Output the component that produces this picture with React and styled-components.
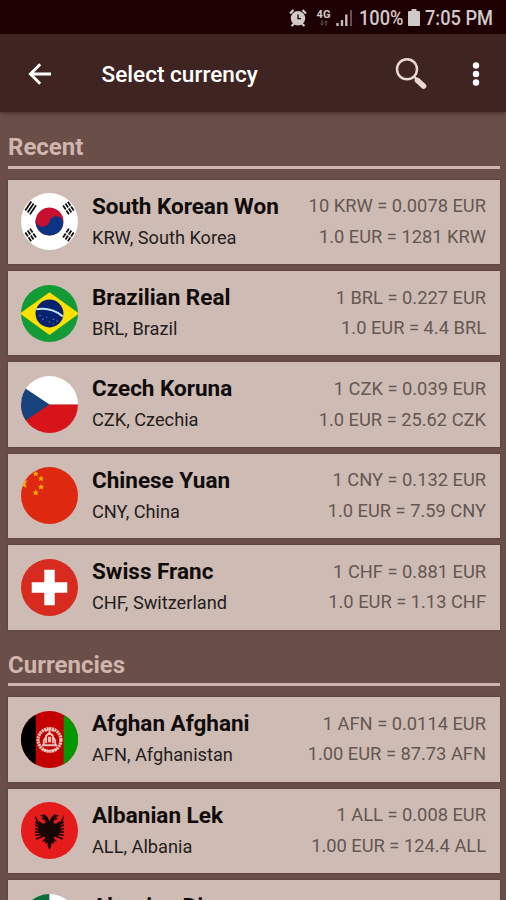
import React from 'react';
import styled, { createGlobalStyle } from 'styled-components';

const recent = [
  { name: 'South Korean Won', code: 'KRW', country: 'South Korea', from: '10 KRW = 0.0078 EUR', to: '1.0 EUR = 1281 KRW' },
  { name: 'Brazilian Real', code: 'BRL', country: 'Brazil', from: '1 BRL = 0.227 EUR', to: '1.0 EUR = 4.4 BRL' },
  { name: 'Czech Koruna', code: 'CZK', country: 'Czechia', from: '1 CZK = 0.039 EUR', to: '1.0 EUR = 25.62 CZK' },
  { name: 'Chinese Yuan', code: 'CNY', country: 'China', from: '1 CNY = 0.132 EUR', to: '1.0 EUR = 7.59 CNY' },
  { name: 'Swiss Franc', code: 'CHF', country: 'Switzerland', from: '1 CHF = 0.881 EUR', to: '1.0 EUR = 1.13 CHF' },
];

const currencies = [
  { name: 'Afghan Afghani', code: 'AFN', country: 'Afghanistan', from: '1 AFN = 0.0114 EUR', to: '1.00 EUR = 87.73 AFN' },
  { name: 'Albanian Lek', code: 'ALL', country: 'Albania', from: '1 ALL = 0.008 EUR', to: '1.00 EUR = 124.4 ALL' },
  { name: 'Algerian Dinar', code: 'DZD', country: 'Algeria', from: '1 DZD = 0.007 EUR', to: '1.00 EUR = 134.5 DZD' },
];

// every flag is drawn in a 60x60 box and clipped to a circle
const flags = {
  KRW: (
    <>
      <rect width="60" height="60" fill="#fff" />
      <g transform="rotate(14 30 30)">
        <circle cx="30" cy="30" r="14.7" fill="#c8102e" />
        <path d="M15.3 30a7.35 7.35 0 0 0 14.7 0a7.35 7.35 0 0 1 14.7 0a14.7 14.7 0 0 1-29.4 0z" fill="#0b3484" />
      </g>
      <g stroke="#111" strokeWidth="1.9">
        <path d="M4.5 18.5l6.3-9.5M7 20.5l6.3-9.5M9.5 22.5l6.3-9.5" />
        <path d="M4.5 41.5l6.3 9.5M7 39.5l6.3 9.5M9.5 37.5l6.3 9.5" strokeDasharray="5 1.2" />
        <path d="M55.5 18.5l-6.3-9.5M53 20.5l-6.3-9.5M50.5 22.5l-6.3-9.5" strokeDasharray="5 1.2" />
        <path d="M55.5 41.5l-6.3 9.5M53 39.5l-6.3 9.5M50.5 37.5l-6.3 9.5" strokeDasharray="5 1.2" />
      </g>
    </>
  ),
  BRL: (
    <>
      <rect width="60" height="60" fill="#129b36" />
      <path d="M-1 30L30 7.5L61 30L30 52.5z" fill="#fee000" />
      <circle cx="30" cy="30" r="14.7" fill="#05216f" />
      <path d="M16 25.5q16-2.5 28 7.5" stroke="#c5e3ee" strokeWidth="2.2" fill="none" />
      <g fill="#6f86bd">
        <circle cx="20" cy="32" r=".8" />
        <circle cx="23" cy="36" r=".8" />
        <circle cx="27" cy="34" r=".7" />
        <circle cx="30" cy="39" r=".8" />
        <circle cx="34" cy="36" r=".8" />
        <circle cx="38" cy="38" r=".8" />
        <circle cx="34" cy="41" r=".7" />
      </g>
    </>
  ),
  CZK: (
    <>
      <rect width="60" height="30" fill="#fff" />
      <rect y="30" width="60" height="30" fill="#d7141a" />
      <path d="M-15 0L30 30L-15 60z" fill="#17427b" />
    </>
  ),
  CNY: (
    <>
      <rect width="60" height="60" fill="#de2910" />
      <g fill="#ffb300">
        <path d="M1 13l1.5 2.5 4.5-1.5-2.5 3.6 1.5 4.2-5-2z" />
        <path id="star" d="M15.5 4l.9 2 2.2.2-1.6 1.5.5 2.3-2-1.2-2 1.2.5-2.3-1.6-1.5 2.2-.2z" />
        <use href="#star" x="5.6" y="5" />
        <use href="#star" x="5.6" y="13.8" />
        <use href="#star" y="19.8" />
      </g>
    </>
  ),
  CHF: (
    <>
      <rect width="60" height="60" fill="#d82b20" />
      <path d="M24.5 11.3h11v13.2h13.2v11h-13.2v13.2h-11v-13.2h-13.2v-11h13.2z" fill="#fff" />
    </>
  ),
  AFN: (
    <>
      <rect width="60" height="60" fill="#c30000" />
      <rect width="15.5" height="60" fill="#000" />
      <rect x="45" width="15" height="60" fill="#009a00" />
      <g fill="none" stroke="#f0c4be">
        <circle cx="30" cy="30.5" r="12" strokeWidth="3.4" strokeDasharray="2.1 .7" />
        <path d="M22 36h16M24 36v-5l2-3M36 36v-5l-2-3M26.5 34v-8l3.5-3 3.5 3v8M30 23v-5M25 21l3-1M35 21l-3-1M22 40q8 4 16 0" strokeWidth="2" />
        <path d="M30 27v6" strokeWidth="3" />
      </g>
    </>
  ),
  ALL: (
    <>
      <rect width="60" height="60" fill="#e51b1c" />
      <g fill="#160606">
        <path d="M30 20l-2-4-3.5-3-4.5 1.5 4 1.5-3 1.5 4 1.5 1 3-3 1-4-3-1 9 3 7 5 1-4 5 4-1-1 3 3-1 0 3 2 4 2-4 0-3 3 1-1-3 4 1-4-5 5-1 3-7-1-9-4 3-3-1 1-3 4-1.5-3-1.5 4-1.5-4.5-1.5-3.5 3z" />
        <path d="M20 24l-5-10 0 3 1 3zM45 14l-5 10 4-4 1-3z" />
      </g>
      <path
        d="M20 24l-5-3M20 27l-5-3M20 30l-5-2M21 32l-6-.5M22 34l-7 1M23 36l-7 3M40 24l5-3M40 27l5-3M40 30l5-2M39 32l6-.5M38 34l7 1M37 36l7 3"
        stroke="#160606"
        strokeWidth="1.7"
      />
    </>
  ),
  DZD: (
    <>
      <rect width="30" height="60" fill="#087038" />
      <rect x="30" width="30" height="60" fill="#fff" />
      <path d="M38 20a14 14 0 1 0 0 20a11 11 0 1 1 0-20z" fill="#d21034" />
    </>
  ),
};

function Flag({ code }) {
  return (
    <FlagIcon viewBox="0 0 60 60">
      {flags[code]}
    </FlagIcon>
  );
}

function Currency({ item }) {
  return (
    <Card>
      <Flag code={item.code} />
      <Names>
        <Name>{item.name}</Name>
        <Country>{item.code}, {item.country}</Country>
      </Names>
      <Rates>
        <Rate>{item.from}</Rate>
        <Rate>{item.to}</Rate>
      </Rates>
    </Card>
  );
}

function Section({ title, items }) {
  return (
    <section>
      <SectionTitle>{title}</SectionTitle>
      <List>
        {items.map((item) => <Currency key={item.code} item={item} />)}
      </List>
    </section>
  );
}

function StatusIcons() {
  return (
    <>
      <AlarmIcon viewBox="0 0 18 18">
        <circle cx="9" cy="9.3" r="7.2" fill="#d2c9c9" />
        <path d="M1 4.5L4.5 1M17 4.5L13.5 1M2.5 17l2.5-2.2M15.5 17l-2.5-2.2" stroke="#d2c9c9" strokeWidth="2.2" />
        <path d="M9 5.5v4.2h3" stroke="#200304" strokeWidth="1.3" fill="none" />
      </AlarmIcon>
      <Network>
        4G
        <svg width="10" height="6" viewBox="0 0 10 6">
          <path d="M3 0v5M1.5 3.5L3 5l1.5-1.5M7 6V1M5.5 2.5L7 1l1.5 1.5" stroke="#6d5555" fill="none" />
        </svg>
      </Network>
      <SignalIcon viewBox="0 0 17 17">
        <path d="M1.5 17v-3M6 17v-6M10.3 17V5.5" stroke="#c5bbbb" strokeWidth="2.4" />
        <path d="M15 17V1" stroke="#695052" strokeWidth="2" />
      </SignalIcon>
    </>
  );
}

export default function App() {
  return (
    <Screen>
      <GlobalStyle />
      <StatusBar>
        <StatusIcons />
        <StatusText $width={44}>100%</StatusText>
        <BatteryIcon viewBox="0 0 12 17">
          <path d="M3.5 0h5v2H11q1 0 1 1v13q0 1-1 1H1q-1 0-1-1V3q0-1 1-1h2.5z" fill="#d2c9c9" />
        </BatteryIcon>
        <StatusText $width={69}>7:05 PM</StatusText>
      </StatusBar>
      <AppBar>
        <IconButton aria-label="Back">
          <svg width="24" height="24" viewBox="0 0 24 24">
            <path d="M12.2 2.2L2.4 12l9.8 9.8M2.4 12H23" stroke="#fff" strokeWidth="2.9" fill="none" />
          </svg>
        </IconButton>
        <Title>Select currency</Title>
        <IconButton aria-label="Search">
          <svg width="32" height="32" viewBox="0 0 32 32">
            <circle cx="12" cy="11.3" r="10" stroke="#ead8d1" strokeWidth="2.5" fill="none" />
            <path d="M19 18.5l3 3" stroke="#ead8d1" strokeWidth="2.4" />
            <path d="M22.5 22.5l6 5.5" stroke="#ead8d1" strokeWidth="5.6" strokeLinecap="round" />
          </svg>
        </IconButton>
        <MenuButton aria-label="More options">
          <svg width="8" height="24" viewBox="0 0 8 24" fill="#fff">
            <circle cx="4" cy="3.5" r="3.2" />
            <circle cx="4" cy="12" r="3.2" />
            <circle cx="4" cy="20.5" r="3.2" />
          </svg>
        </MenuButton>
      </AppBar>
      <Content>
        <Section title="Recent" items={recent} />
        <Section title="Currencies" items={currencies} />
      </Content>
    </Screen>
  );
}

const GlobalStyle = createGlobalStyle`
  * {
    box-sizing: border-box;
  }

  body {
    margin: 0;
    overflow: hidden;
    font-family: Roboto, sans-serif;
    background: #6a4e48;
  }
`;

const Screen = styled.div`
  display: flex;
  flex-direction: column;
  height: 900px;
  overflow: hidden;
`;

const StatusBar = styled.header`
  display: flex;
  flex: 0 0 34px;
  align-items: center;
  justify-content: flex-end;
  padding: 1px 12px 0 0;
  background: #1e0002;
`;

const AlarmIcon = styled.svg`
  width: 18px;
  height: 18px;
  margin-right: 9px;
`;

const Network = styled.span`
  display: flex;
  flex-direction: column;
  align-items: center;
  width: 15px;
  margin-right: 5px;
  color: #d2c9c9;
  font-size: 11px;
  font-weight: 700;
  line-height: 10px;
`;

const SignalIcon = styled.svg`
  width: 17px;
  height: 17px;
  margin-right: 6px;
`;

const BatteryIcon = styled.svg`
  width: 12px;
  height: 17px;
  margin: 0 5px;
`;

const StatusText = styled.span`
  width: ${(props) => props.$width}px;
  color: #d2c9c9;
  font-size: 20.5px;
  font-weight: 500;
  white-space: nowrap;
  transform: scaleX(.89);
  transform-origin: left;
`;

const AppBar = styled.nav`
  position: relative;
  display: flex;
  flex: 0 0 78px;
  align-items: center;
  padding: 2px 26px 0 28px;
  background: #3f2522;
  box-shadow: 0 1px 4px rgba(30, 10, 10, .5);
`;

const IconButton = styled.button`
  display: flex;
  padding: 0;
  border: none;
  background: none;
`;

const MenuButton = styled(IconButton)`
  margin-left: 45px;
`;

const Title = styled.h1`
  flex: 1;
  margin: 0 0 0 49.5px;
  color: #fff;
  font-size: 22.6px;
  font-weight: 500;
`;

const Content = styled.main`
  flex: 1;
  padding: 0 6px 0 8px;
  overflow: hidden;
`;

const SectionTitle = styled.h2`
  height: 56.8px;
  margin: 0 0 10.8px;
  padding-top: 21px;
  border-bottom: 3px solid #cfb5ad;
  color: #cfb5ad;
  font-size: 24px;
  font-weight: 700;
  line-height: 28px;
`;

const List = styled.div`
  display: flex;
  flex-direction: column;
  gap: 7px;
`;

const Card = styled.article`
  display: flex;
  height: 84.4px;
  padding: 13px 14px 0 13px;
  background: #cdbbb4;
  box-shadow: 0 0 2px #4f3732;
`;

const FlagIcon = styled.svg`
  width: 57px;
  height: 57px;
  margin-top: .7px;
  border-radius: 50%;
`;

const Names = styled.div`
  flex: 1;
  margin: -1px 0 0 14px;
  white-space: nowrap;
`;

const Name = styled.h3`
  margin: 0;
  color: #110c0b;
  font-size: 22.5px;
  font-weight: 700;
  line-height: 28px;
`;

const Country = styled.p`
  margin: 5px 0 0;
  color: #241d1b;
  font-size: 18.2px;
  line-height: 26px;
`;

const Rates = styled.div`
  margin-top: -.4px;
  text-align: right;
  white-space: nowrap;
`;

const Rate = styled.p`
  margin: 0 0 2.6px;
  color: #655751;
  font-size: 18.3px;
  line-height: 28px;
`;
